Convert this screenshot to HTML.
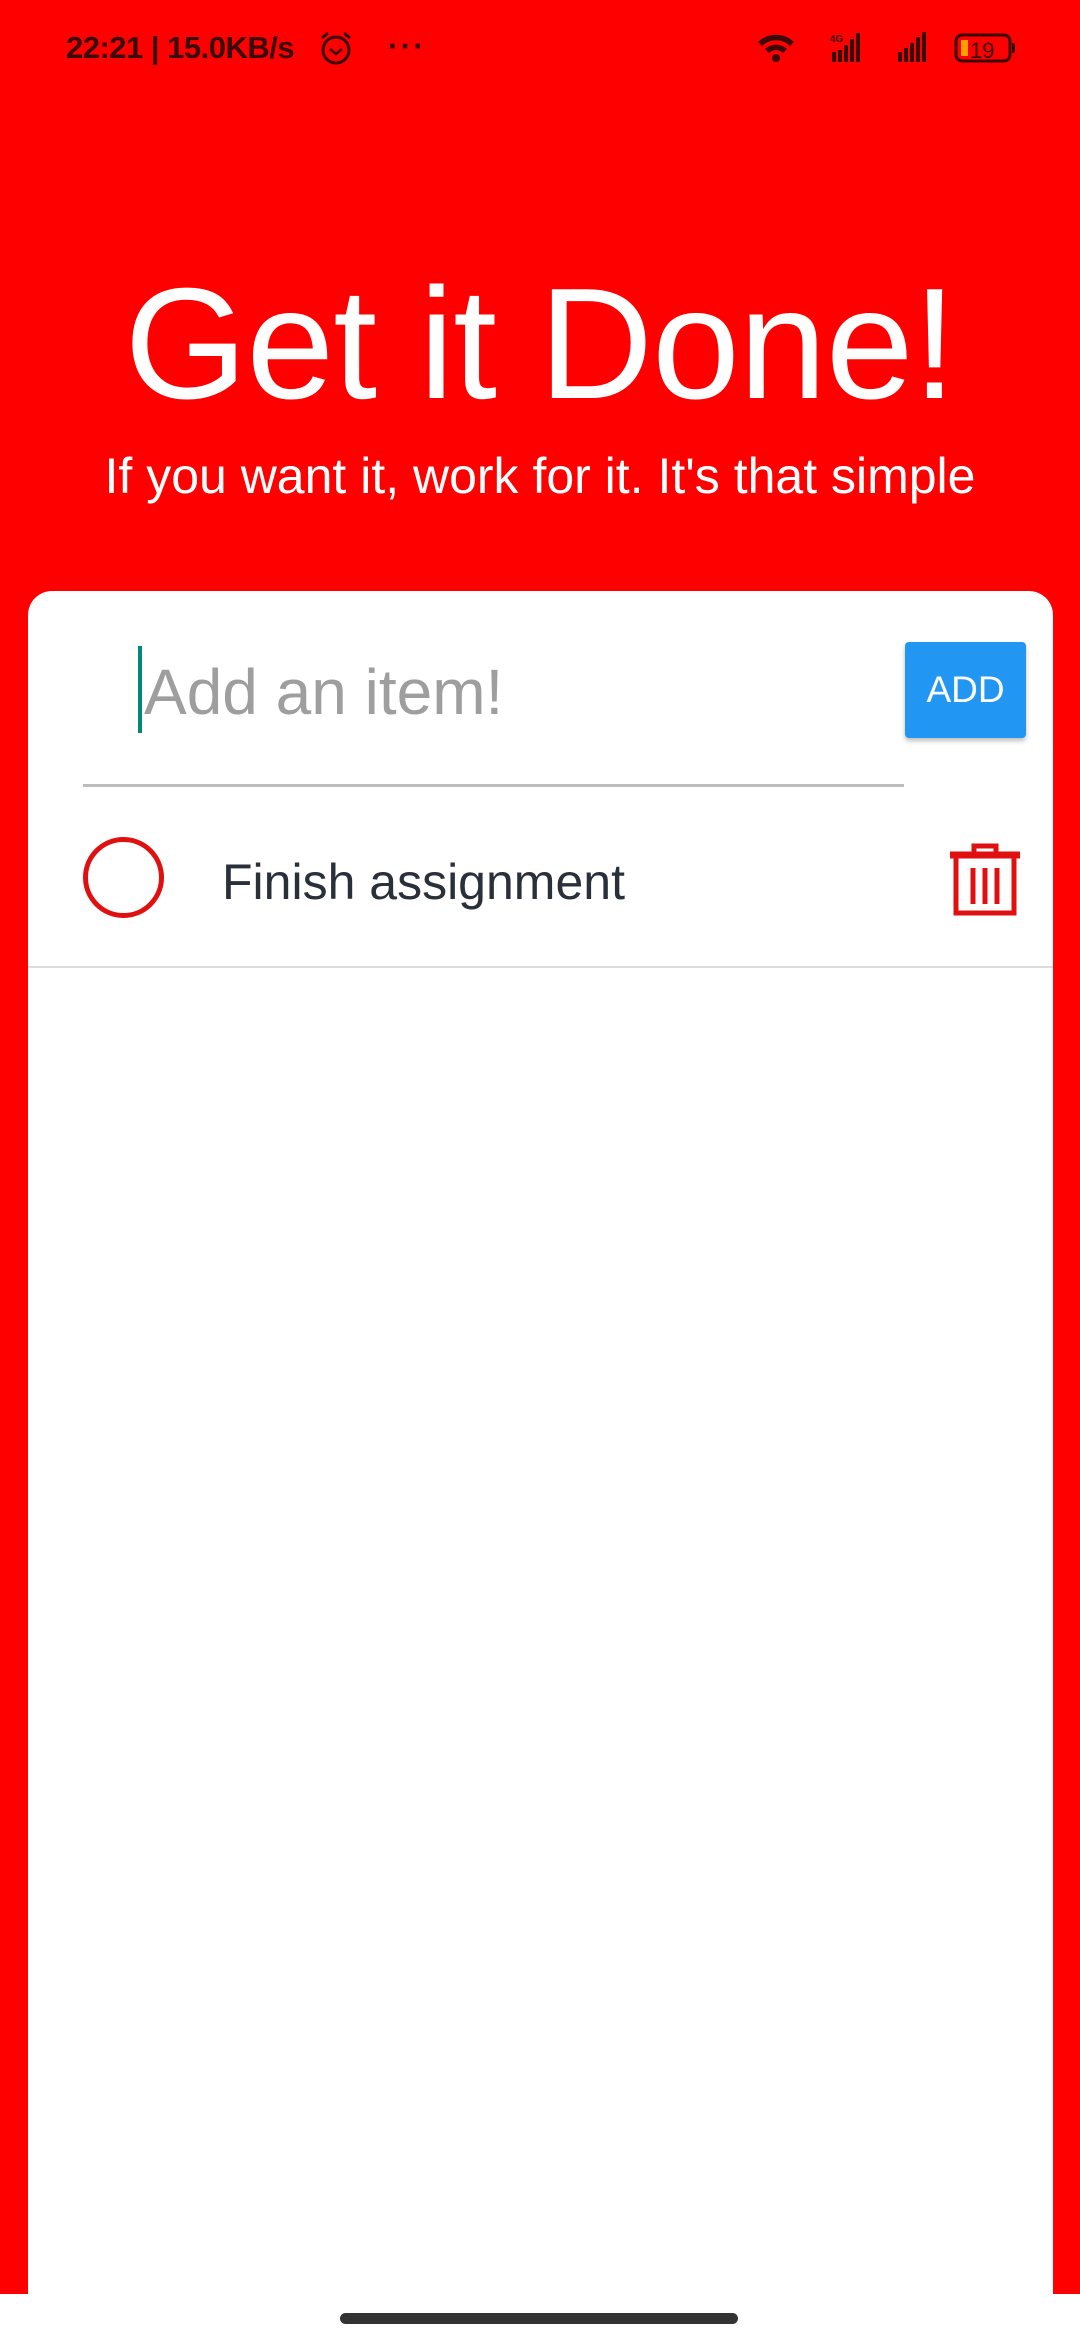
<!DOCTYPE html>
<html><head><meta charset="utf-8"><style>
*{margin:0;padding:0;box-sizing:border-box}
body{width:1080px;height:2340px;background:#fff;font-family:"Liberation Sans",sans-serif;position:relative;overflow:hidden}
.red{position:absolute;left:0;top:0;width:1080px;height:2294px;background:#ff0000}
.card{position:absolute;left:28px;top:591px;width:1025px;height:1749px;background:#fff;border-radius:24px 24px 0 0}
.abs{position:absolute}
</style></head><body>
<div class="red"></div>
<div class="abs" style="left:66px;top:30px;font-size:31px;font-weight:bold;color:#3a0a0a;letter-spacing:-0.5px">22:21 | 15.0KB/s</div>
<svg class="abs" style="left:318px;top:30px" width="36" height="36" viewBox="0 0 36 36"><circle cx="18" cy="20" r="13" fill="none" stroke="#3a0a0a" stroke-width="3"/><path d="M12 19l6 5 6-5" fill="none" stroke="#3a0a0a" stroke-width="2.5"/><path d="M4 8l6-5M32 8l-6-5" stroke="#3a0a0a" stroke-width="3"/></svg>
<div class="abs" style="left:388px;top:28px;font-size:32px;font-weight:bold;color:#3a0a0a;letter-spacing:2px">···</div>
<svg class="abs" style="left:756px;top:30px" width="270" height="36" viewBox="0 0 270 36"><g fill="#3a0a0a"><path d="M2 12a26 26 0 0 1 36 0l-4 4a20 20 0 0 0-28 0z"/><path d="M9 19a16 16 0 0 1 22 0l-4 4a10 10 0 0 0-14 0z"/><circle cx="20" cy="28" r="4"/>
<rect x="76" y="22" width="4" height="10"/><rect x="82" y="20" width="4" height="12"/><rect x="88" y="15" width="4" height="17"/><rect x="94" y="9" width="4" height="23"/><rect x="100" y="3" width="4" height="29"/>
<rect x="142" y="22" width="4" height="10"/><rect x="148" y="18" width="4" height="14"/><rect x="154" y="13" width="4" height="19"/><rect x="160" y="7" width="4" height="25"/><rect x="166" y="2" width="4" height="30"/>
<rect x="200" y="5" width="54" height="26" rx="6" fill="none" stroke="#3a0a0a" stroke-width="3"/><rect x="256" y="13" width="3" height="10"/></g><rect x="205" y="10" width="7" height="16" fill="#ffa000"/><text x="214" y="28" font-size="22" fill="#3a0a0a" font-family="Liberation Sans">19</text><text x="74" y="12" font-size="10" font-weight="bold" fill="#3a0a0a" font-family="Liberation Sans">4G</text></svg>
<div class="abs" style="left:0;width:1080px;top:254px;text-align:center;color:#fff;font-size:158px;line-height:180px;letter-spacing:-1px">Get it Done!</div>
<div class="abs" style="left:0;width:1080px;top:448px;text-align:center;color:#fff;font-size:50px;line-height:56px">If you want it, work for it. It's that simple</div>
<div class="card"></div>
<div class="abs" style="left:138px;top:646px;width:4px;height:87px;background:#00897b"></div>
<div class="abs" style="left:144px;top:652px;font-size:64px;line-height:80px;color:#9e9e9e">Add an item!</div>
<div class="abs" style="left:83px;top:784px;width:821px;height:3px;background:#bdbdbd"></div>
<div class="abs" style="left:905px;top:642px;width:121px;height:96px;background:#2196f3;border-radius:4px;box-shadow:0 3px 5px rgba(0,0,0,.25);color:#fff;font-size:37px;line-height:96px;text-align:center">ADD</div>
<div class="abs" style="left:83px;top:837px;width:81px;height:81px;border:5px solid #e01010;border-radius:50%"></div>
<div class="abs" style="left:222px;top:852px;font-size:50px;line-height:60px;color:#2a303a">Finish assignment</div>
<svg class="abs" style="left:946px;top:841px" width="78" height="78" viewBox="0 0 78 78"><g fill="none" stroke="#e01010" stroke-width="5"><path d="M28 12v-7h22v7"/><path d="M4 14h70" stroke-width="7"/><path d="M10 16v56h58v-56"/><path d="M27 27v36M39 27v36M51 27v36"/></g></svg>
<div class="abs" style="left:28px;top:966px;width:1025px;height:2px;background:#dcdcdc"></div>
<div class="abs" style="left:340px;top:2313px;width:398px;height:11px;background:#333;border-radius:6px"></div>
</body></html>
